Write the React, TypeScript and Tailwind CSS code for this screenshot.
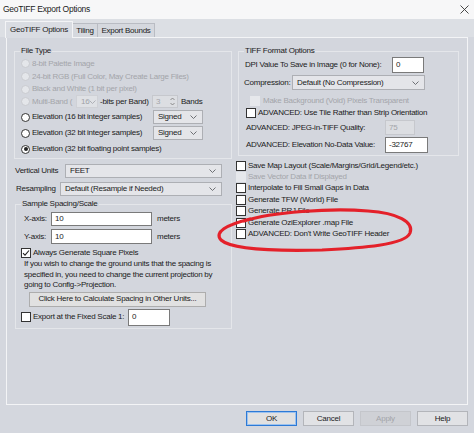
import React from 'react'

const font = "font-['Liberation_Sans',Arial,sans-serif]"

function Chevron({ gray }: { gray?: boolean }) {
  return (
    <svg width="7" height="4" viewBox="0 0 7 4" className="shrink-0">
      <polyline points="0.5,0.5 3.5,3.5 6.5,0.5" fill="none" stroke={gray ? '#a8aab0' : '#606266'} strokeWidth="0.9" />
    </svg>
  )
}

function Radio({ checked, disabled }: { checked?: boolean; disabled?: boolean }) {
  return (
    <span
      className={`w-[9px] h-[9px] rounded-full shrink-0 flex items-center justify-center border ${
        disabled ? 'border-[#c9cbd0] bg-[#e4e6ea]' : 'border-[#333] bg-white'
      }`}
    >
      {checked && <span className="w-[4px] h-[4px] rounded-full bg-[#222]" />}
    </span>
  )
}

function Check({ checked, disabled }: { checked?: boolean; disabled?: boolean }) {
  return (
    <span
      className={`w-[10px] h-[10px] shrink-0 flex items-center justify-center border ${
        disabled ? 'border-transparent bg-[#e6e8ec]' : 'border-[#333] bg-white'
      }`}
    >
      {checked && (
        <svg width="8" height="8" viewBox="0 0 8 8">
          <polyline points="1,4.2 3,6.2 7,1.5" fill="none" stroke="#222" strokeWidth="1.1" />
        </svg>
      )}
    </span>
  )
}

function Select({ value, w, h = 14, disabled }: { value: string; w: number; h?: number; disabled?: boolean }) {
  return (
    <div
      className={`flex items-center justify-between pl-[4px] pr-[5px] border shrink-0 ${
        disabled ? 'border-[#cfd1d6] bg-[#dfe1e5] text-[#a0a2a7]' : 'border-[#adafb4] bg-[#e4e5e9]'
      }`}
      style={{ width: w, height: h }}
    >
      <span>{value}</span>
      <Chevron gray={disabled} />
    </div>
  )
}

function TextBox({ value, w, h, disabled }: { value: string; w: number; h: number; disabled?: boolean }) {
  return (
    <div
      className={`flex items-center pl-[3px] border shrink-0 ${
        disabled ? 'border-[#c6c8cd] bg-[#dcdee2] text-[#a3a5aa]' : 'border-[#7a7a7a] bg-white'
      }`}
      style={{ width: w, height: h }}
    >
      {value}
    </div>
  )
}

function Group({ label, className, children }: { label: string; className: string; children: React.ReactNode }) {
  return (
    <fieldset className={`border border-[#e4e6ea] ${className}`}>
      <legend className="ml-[5px] px-[1px] h-[12px] leading-[12px]">{label}</legend>
      {children}
    </fieldset>
  )
}

const checks: [string, boolean][] = [
  ['Save Map Layout (Scale/Margins/Grid/Legend/etc.)', false],
  ['Save Vector Data if Displayed', true],
  ['Interpolate to Fill Small Gaps in Data', false],
  ['Generate TFW (World) File', false],
  ['Generate PRJ File', false],
  ['Generate OziExplorer .map File', false],
  ["ADVANCED: Don't Write GeoTIFF Header", false],
]

export default function App() {
  const dis = 'text-[#a3a5aa]'
  return (
    <div
      className={`relative w-[474px] h-[433px] overflow-hidden bg-[#d4d7de] text-[#1b1b1b] text-[8px] tracking-[-0.25px] whitespace-nowrap ${font}`}
    >
      {/* title bar */}
      <div className="h-[19px] bg-[#f7f7f8] flex items-center justify-between pl-[3px] pr-[5px]">
        <span className="text-[8.5px]">GeoTIFF Export Options</span>
        <svg width="9" height="9" viewBox="0 0 9 9">
          <path d="M0.5 0.5 L8.5 8.5 M8.5 0.5 L0.5 8.5" stroke="#333" strokeWidth="0.9" />
        </svg>
      </div>

      {/* tabs */}
      <div className="h-[18px] bg-[#dcdfe4] flex items-end pl-[5px]">
        <div className="relative z-10 -mb-px w-[68px] h-[17px] border-l border-t border-r border-[#f3f4f6] bg-[#d9dce2] flex items-center justify-center">
          GeoTIFF Options
        </div>
        <div className="w-[25px] h-[14px] border-t border-r border-[#b9bcc3] bg-[#d5d8de] flex items-center justify-center">
          Tiling
        </div>
        <div className="w-[57px] h-[14px] border-t border-r border-[#b9bcc3] bg-[#d5d8de] flex items-center justify-center">
          Export Bounds
        </div>
      </div>

      {/* tab page */}
      <div className="ml-[6px] w-[462px] h-[368px] border border-[#f3f4f6] bg-[#d3d6dd] flex pl-[7px] pt-[7px]">
        {/* left column */}
        <div className="w-[218px] flex flex-col">
          <Group label="File Type" className="w-[218px] pb-[2px]">
            <div className="pl-[6px] flex flex-col">
              <div className={`h-[13px] flex items-center gap-[2px] ${dis}`}><Radio disabled />8-bit Palette Image</div>
              <div className={`h-[13px] flex items-center gap-[2px] ${dis}`}><Radio disabled />24-bit RGB (Full Color, May Create Large Files)</div>
              <div className={`h-[12px] flex items-center gap-[2px] ${dis}`}><Radio disabled />Black and White (1 bit per pixel)</div>
              <div className="h-[13px] flex items-center">
                <Radio disabled />
                <span className={`ml-[2px] w-[44px] ${dis}`}>Multi-Band (</span>
                <Select value="16" w={22} h={13} disabled />
                <span className="ml-[2px] w-[50px]">-bits per Band)</span>
                <div className="ml-[2px] w-[26px] h-[13px] border border-[#c6c8cd] bg-[#dcdee2] flex items-center justify-between pl-[3px] pr-[2px] text-[#a3a5aa]">
                  <span>3</span>
                  <svg width="5" height="9" viewBox="0 0 5 9">
                    <path d="M0.5 3 L2.5 1 L4.5 3 M0.5 6 L2.5 8 L4.5 6" fill="none" stroke="#777" strokeWidth="0.8" />
                  </svg>
                </div>
                <span className="ml-[3px]">Bands</span>
              </div>
              <div className="mt-[2px] h-[14px] flex items-center gap-[2px]">
                <Radio />
                <span className="w-[119px]">Elevation (16 bit integer samples)</span>
                <Select value="Signed" w={50} h={14} />
              </div>
              <div className="mt-[2px] h-[14px] flex items-center gap-[2px]">
                <Radio />
                <span className="w-[119px]">Elevation (32 bit integer samples)</span>
                <Select value="Signed" w={50} h={14} />
              </div>
              <div className="mt-[2px] h-[14px] flex items-center gap-[2px]">
                <Radio checked />
                Elevation (32 bit floating point samples)
              </div>
            </div>
          </Group>

          <div className="mt-[5px] h-[14px] flex items-center pl-[1px]">
            <span className="w-[50px]">Vertical Units</span>
            <Select value="FEET" w={157} />
          </div>
          <div className="mt-[4px] h-[14px] flex items-center pl-[2px]">
            <span className="w-[44px]">Resampling</span>
            <Select value="Default (Resample if Needed)" w={162} />
          </div>

          <Group label="Sample Spacing/Scale" className="ml-[1px] mt-[2px] w-[217px] pb-[2px]">
            <div className="flex flex-col">
              <div className="mt-[2px] h-[14px] flex items-center pl-[8px]">
                <span className="w-[27px]">X-axis:</span>
                <TextBox value="10" w={101} h={14} />
                <span className="ml-[5px]">meters</span>
              </div>
              <div className="mt-[3px] h-[15px] flex items-center pl-[8px]">
                <span className="w-[27px]">Y-axis:</span>
                <TextBox value="10" w={101} h={15} />
                <span className="ml-[5px]">meters</span>
              </div>
              <div className="mt-[3px] h-[12px] flex items-center gap-[2px] pl-[5px]">
                <Check checked />
                Always Generate Square Pixels
              </div>
              <p className="pl-[8px] leading-[10.5px]">
                If you wish to change the ground units that the spacing is
                <br />
                specified in, you need to change the current projection by
                <br />
                going to Config-&gt;Projection.
              </p>
              <button className="ml-[13px] mt-[1px] w-[177px] h-[15px] border border-[#adadad] bg-[#e1e1e1] flex items-center justify-center">
                Click Here to Calculate Spacing in Other Units...
              </button>
              <div className="mt-[2px] h-[17px] flex items-center pl-[5px]">
                <Check />
                <span className="ml-[2px] w-[95px]">Export at the Fixed Scale 1:</span>
                <TextBox value="0" w={42} h={17} />
              </div>
            </div>
          </Group>
        </div>

        {/* right column */}
        <div className="ml-[4px] w-[224px] flex flex-col">
          <Group label="TIFF Format Options" className="ml-[2px] w-[221px] pb-[2px]">
            <div className="flex flex-col">
              <div className="h-[16px] flex items-center pl-[6px]">
                <span className="w-[147px]">DPI Value To Save in Image (0 for None):</span>
                <TextBox value="0" w={32} h={16} />
              </div>
              <div className="mt-[2px] h-[15px] flex items-center pl-[5px]">
                <span className="w-[48px]">Compression:</span>
                <Select value="Default (No Compression)" w={133} h={15} />
              </div>
              <div className={`mt-[5px] h-[12px] flex items-center gap-[3px] pl-[11px] ${dis}`}>
                <Check disabled />
                Make Background (Void) Pixels Transparent
              </div>
              <div className="h-[11px] flex items-center gap-[2px] pl-[7px]">
                <Check />
                ADVANCED: Use Tile Rather than Strip Orientation
              </div>
              <div className="mt-[2px] h-[15px] flex items-center pl-[7px]">
                <span className="w-[139px]">ADVANCED: JPEG-in-TIFF Quality:</span>
                <TextBox value="75" w={30} h={15} disabled />
              </div>
              <div className="mt-[2px] h-[16px] flex items-center pl-[7px]">
                <span className="w-[139px]">ADVANCED: Elevation No-Data Value:</span>
                <TextBox value="-32767" w={43} h={16} />
              </div>
            </div>
          </Group>

          <div className="mt-[4px] flex flex-col">
            {checks.map(([t, d]) => (
              <div key={t} className={`h-[11.4px] flex items-center gap-[2px] ${d ? dis : ''}`}>
                <Check disabled={d} />
                {t}
              </div>
            ))}
          </div>
        </div>
      </div>

      {/* buttons */}
      <div className="mt-[6px] flex justify-end gap-[6px] pr-[6px]">
        <button className="w-[51px] h-[15px] border border-[#2d7ad6] bg-[#e1e1e1] shadow-[inset_0_0_0_1px_#9cc2ee] flex items-center justify-center">OK</button>
        <button className="w-[51px] h-[15px] border border-[#b3b5ba] bg-[#e1e2e5] flex items-center justify-center">Cancel</button>
        <button className="w-[51px] h-[15px] border border-[#c4c6cb] bg-[#cfd1d6] text-[#a3a5aa] flex items-center justify-center">Apply</button>
        <button className="w-[51px] h-[15px] border border-[#b3b5ba] bg-[#e1e2e5] flex items-center justify-center">Help</button>
      </div>

      {/* red hand-drawn ellipse annotation */}
      <svg className="absolute left-0 top-0 pointer-events-none" width="474" height="433" viewBox="0 0 474 433">
        <path
          d="M244 221 C272 212, 330 208, 368 211 C398 213, 414 222, 410 233 C405 245, 362 248, 322 250 C282 251, 232 250, 221 240 C214 232, 226 225, 250 219"
          fill="none"
          stroke="#e4212a"
          strokeWidth="3.2"
          strokeLinecap="round"
        />
      </svg>
    </div>
  )
}
